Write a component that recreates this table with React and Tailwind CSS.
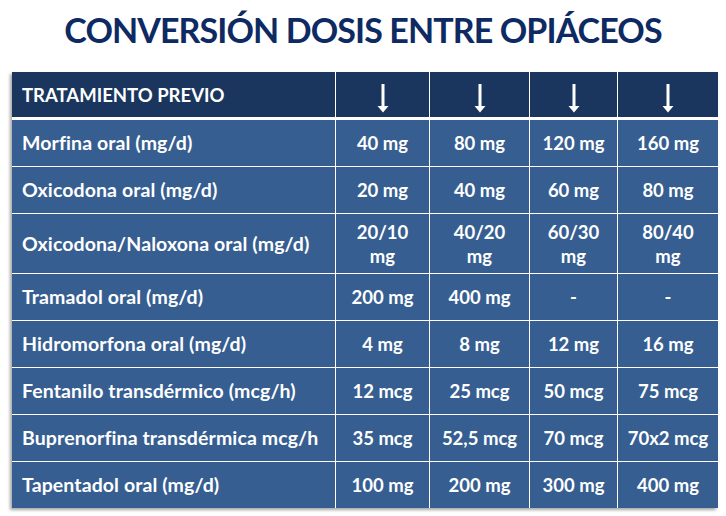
const rows = [
  { name: 'Morfina oral (mg/d)', vals: ['40 mg', '80 mg', '120 mg', '160 mg'] },
  { name: 'Oxicodona oral (mg/d)', vals: ['20 mg', '40 mg', '60 mg', '80 mg'] },
  { name: 'Oxicodona/Naloxona oral (mg/d)', vals: ['20/10 mg', '40/20 mg', '60/30 mg', '80/40 mg'], tall: true },
  { name: 'Tramadol oral (mg/d)', vals: ['200 mg', '400 mg', '-', '-'] },
  { name: 'Hidromorfona oral (mg/d)', vals: ['4 mg', '8 mg', '12 mg', '16 mg'] },
  { name: 'Fentanilo transdérmico (mcg/h)', vals: ['12 mcg', '25 mcg', '50 mcg', '75 mcg'] },
  { name: 'Buprenorfina transdérmica mcg/h', vals: ['35 mcg', '52,5 mcg', '70 mcg', '70x2 mcg'] },
  { name: 'Tapentadol oral (mg/d)', vals: ['100 mg', '200 mg', '300 mg', '400 mg'] },
]

const cols = 'grid grid-cols-[323px_93px_99px_87px_100px] gap-x-px'

function DownArrow() {
  return (
    <svg width="12" height="29" viewBox="0 0 12 29" aria-hidden="true">
      <rect x="4.5" y="0" width="3" height="23" fill="#fff" />
      <path d="M0.5 22 H11.5 L6 28.5 Z" fill="#fff" />
    </svg>
  )
}

export default function App() {
  return (
    <div className="h-[516px] w-[726px] bg-white font-['Lato',sans-serif]">
      <h1 className="pt-[9px] text-center text-[34px] font-bold leading-[42px] tracking-[-0.9px] text-[#0e2a63]">
        CONVERSIÓN DOSIS ENTRE OPIÁCEOS
      </h1>

      <div className="ml-[12px] mt-[21px] w-[706px] bg-white shadow-[-2px_2px_3px_rgba(0,0,0,0.35)]">
        <div className={`${cols} h-[45px] bg-white`}>
          <div className="flex items-center bg-[#1b365e] pl-[10px] pt-[3px] text-[18.5px] font-bold text-white">TRATAMIENTO PREVIO</div>
          {[0, 1, 2, 3].map((i) => (
            <div key={i} className="flex items-end justify-center bg-[#1b365e] pb-[4px]">
              <DownArrow />
            </div>
          ))}
        </div>

        <div className="mt-[3px] flex flex-col gap-y-px bg-white">
          {rows.map((row) => (
            <div key={row.name} className={`${cols} ${row.tall ? 'h-[59px]' : 'h-[46px]'} bg-white text-[18.5px] font-bold leading-[24px] text-white`}>
              <div className="flex items-center bg-[#365e91] pl-[10px] text-[19.5px] tracking-[0.1px]">{row.name}</div>
              {row.vals.map((v, i) => (
                <div key={i} className={`flex items-center justify-center bg-[#365e91] text-center ${row.tall ? 'px-[14px]' : ''}`}>{v}</div>
              ))}
            </div>
          ))}
        </div>
      </div>
    </div>
  )
}
